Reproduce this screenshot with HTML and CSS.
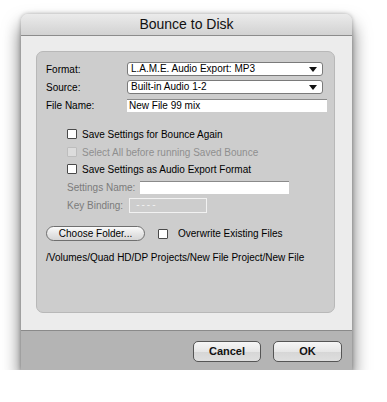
FILE: index.html
```html
<!DOCTYPE html>
<html>
<head>
<meta charset="utf-8">
<link rel="stylesheet" href="styles.css">
</head>
<body>
<div class="stage">
  <div class="window">
    <div class="titlebar">Bounce to Disk</div>
    <div class="content">
      <div class="panel">
        <div class="row r-format">
          <span class="label">Format:</span>
          <div class="select">L.A.M.E. Audio Export: MP3<span class="arrow"></span></div>
        </div>
        <div class="row r-source">
          <span class="label">Source:</span>
          <div class="select">Built-in Audio 1-2<span class="arrow"></span></div>
        </div>
        <div class="row r-file">
          <span class="label">File Name:</span>
          <div class="input wide">New File 99 mix</div>
        </div>
        <div class="check c1"><span class="box"></span>Save Settings for Bounce Again</div>
        <div class="check c2 disabled"><span class="box"></span>Select All before running Saved Bounce</div>
        <div class="check c3"><span class="box"></span>Save Settings as Audio Export Format</div>
        <div class="row r-sname">
          <span class="sublabel">Settings Name:</span>
          <div class="input sname"></div>
        </div>
        <div class="row r-key">
          <span class="sublabel">Key Binding:</span>
          <div class="input key">----</div>
        </div>
        <div class="row r-folder">
          <div class="pill">Choose Folder...</div>
          <div class="check inline"><span class="box"></span>Overwrite Existing Files</div>
        </div>
        <div class="path">/Volumes/Quad HD/DP Projects/New File Project/New File</div>
      </div>
    </div>
    <div class="footer">
      <div class="btn cancel">Cancel</div>
      <div class="btn ok">OK</div>
    </div>
  </div>
</div>
</body>
</html>
```
FILE: styles.css
```css
html, body {
  margin: 0;
  padding: 0;
  background: #ffffff;
}
body {
  font-family: "Liberation Sans", Arial, sans-serif;
  font-size: 10px;
  color: #000;
}
.stage {
  padding: 14px 0 0 21px;
}
.window {
  width: 331px;
  height: 356px;
  border-radius: 7px 7px 0 0;
  background: #ededed;
  box-shadow: 0 11px 18px rgba(0,0,0,0.6), 0 0 4px rgba(0,0,0,0.3);
  display: flex;
  flex-direction: column;
  overflow: hidden;
}
.titlebar {
  height: 22px;
  box-sizing: border-box;
  border-bottom: 1px solid #8c8c8c;
  background: linear-gradient(#ebebeb, #d2d2d2);
  text-align: center;
  font-size: 14px;
  line-height: 21px;
  color: #111;
}
.content {
  flex: 1;
  padding: 15px 17px 16px 15px;
  background: #ececec;
}
.panel {
  height: 262px;
  box-sizing: border-box;
  background: #cdcdcd;
  border: 1px solid #b8b8b8;
  border-radius: 7px;
  padding: 10px 0 0 9px;
  display: flex;
  flex-direction: column;
}
.row {
  display: flex;
  align-items: center;
}
.label {
  width: 81px;
}
.sublabel {
  color: #7b7b7b;
  padding-left: 21px;
}
.select {
  position: relative;
  width: 196px;
  height: 14px;
  box-sizing: border-box;
  background: #fff;
  border: 1px solid #7a7a7a;
  border-radius: 3px;
  padding-left: 3px;
  line-height: 12px;
}
.arrow {
  position: absolute;
  right: 5px;
  top: 4px;
  width: 0;
  height: 0;
  border-left: 4px solid transparent;
  border-right: 4px solid transparent;
  border-top: 5px solid #111;
}
.r-format { height: 14px; }
.r-source { height: 14px; margin-top: 4px; }
.r-file { height: 13px; margin-top: 5px; }
.input {
  height: 13px;
  box-sizing: border-box;
  background: #fff;
  border-top: 1px solid #8a8a8a;
  padding-left: 2px;
  line-height: 12px;
}
.input.wide { width: 200px; }
.input.sname {
  width: 149px;
  margin-left: 5px;
}
.input.key {
  width: 78px;
  height: 15px;
  margin-left: 6px;
  background: #cdcdcd;
  border: 1px solid #f2f2f2;
  color: #f2f2f2;
  letter-spacing: 2px;
  padding-left: 6px;
  line-height: 12px;
}
.check {
  display: flex;
  align-items: center;
  height: 10px;
  padding-left: 21px;
}
.box {
  width: 10px;
  height: 10px;
  box-sizing: border-box;
  background: #fff;
  border: 1px solid #4a4a4a;
  border-radius: 1px;
  margin-right: 5px;
}
.check.disabled { color: #8f8f8f; }
.check.disabled .box {
  background: #dcdcdc;
  border-color: #bdbdbd;
}
.c1 { margin-top: 17px; }
.c2 { margin-top: 8px; }
.c3 { margin-top: 7px; }
.r-sname { height: 13px; margin-top: 7px; }
.r-key { height: 15px; margin-top: 4px; }
.r-folder { height: 15px; margin-top: 13px; }
.pill {
  width: 99px;
  height: 15px;
  box-sizing: border-box;
  border: 1px solid #6f6f6f;
  border-radius: 8px;
  background: linear-gradient(#fbfbfb, #e4e4e4 55%, #d6d6d6);
  text-align: center;
  line-height: 13px;
}
.check.inline {
  padding-left: 13px;
}
.check.inline .box { margin-right: 10px; }
.path {
  margin-top: 11px;
  line-height: 12px;
}
.footer {
  height: 40px;
  box-sizing: border-box;
  border-top: 1px solid #8a8a8a;
  background: #b4b4b4;
  display: flex;
  justify-content: flex-end;
  align-items: flex-start;
  padding: 10px 10px 0 0;
  gap: 12px;
}
.btn {
  height: 21px;
  box-sizing: border-box;
  border: 1px solid #555;
  border-radius: 5px;
  background: linear-gradient(#f6f6f6, #e6e6e6 50%, #d6d6d6 51%, #dedede);
  font-weight: bold;
  font-size: 11px;
  text-align: center;
  line-height: 19px;
  color: #111;
}
.btn.cancel { width: 68px; }
.btn.ok { width: 69px; }
```
